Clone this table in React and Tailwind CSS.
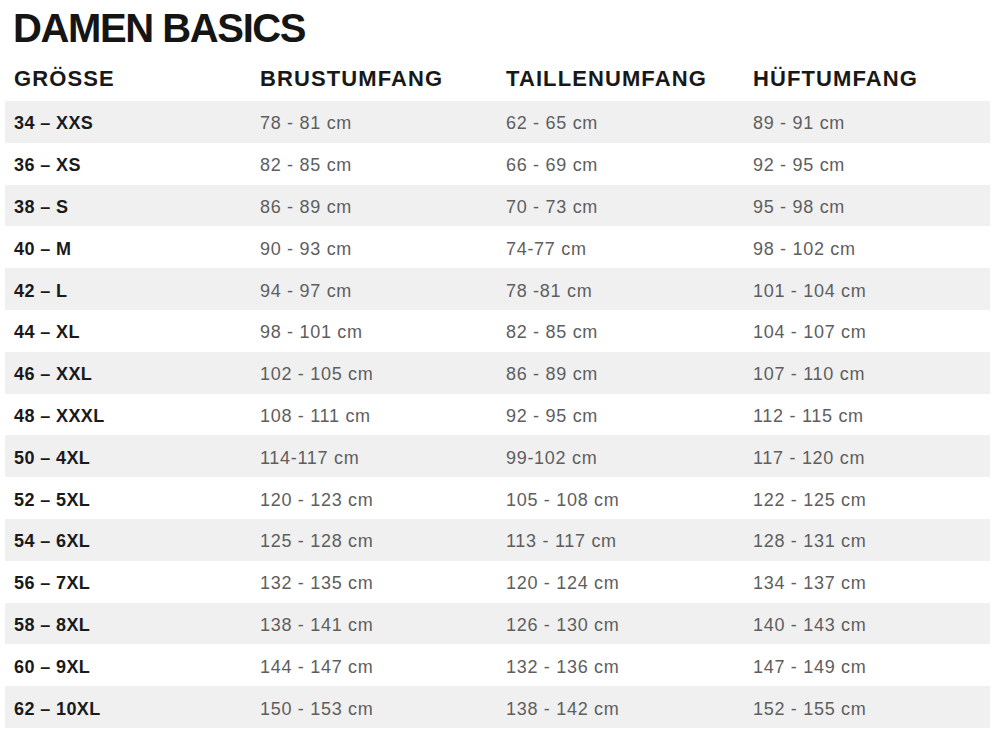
import React from "react";

const rows = [
  ["34 – XXS", "78 - 81 cm", "62 - 65 cm", "89 - 91 cm"],
  ["36 – XS", "82 - 85 cm", "66 - 69 cm", "92 - 95 cm"],
  ["38 – S", "86 - 89 cm", "70 - 73 cm", "95 - 98 cm"],
  ["40 – M", "90 - 93 cm", "74-77 cm", "98 - 102 cm"],
  ["42 – L", "94 - 97 cm", "78 -81 cm", "101 - 104 cm"],
  ["44 – XL", "98 - 101 cm", "82 - 85 cm", "104 - 107 cm"],
  ["46 – XXL", "102 - 105 cm", "86 - 89 cm", "107 - 110 cm"],
  ["48 – XXXL", "108 - 111 cm", "92 - 95 cm", "112 - 115 cm"],
  ["50 – 4XL", "114-117 cm", "99-102 cm", "117 - 120 cm"],
  ["52 – 5XL", "120 - 123 cm", "105 - 108 cm", "122 - 125 cm"],
  ["54 – 6XL", "125 - 128 cm", "113 - 117 cm", "128 - 131 cm"],
  ["56 – 7XL", "132 - 135 cm", "120 - 124 cm", "134 - 137 cm"],
  ["58 – 8XL", "138 - 141 cm", "126 - 130 cm", "140 - 143 cm"],
  ["60 – 9XL", "144 - 147 cm", "132 - 136 cm", "147 - 149 cm"],
  ["62 – 10XL", "150 - 153 cm", "138 - 142 cm", "152 - 155 cm"],
];

export default function App() {
  return (
    <div className="w-[1000px] h-[735px] bg-white overflow-hidden font-['Liberation_Sans',Arial,sans-serif]">
      <h1 className="mt-[8px] pl-[13px] text-[40px] leading-none font-bold tracking-[-1.4px] text-[#151515]">
        DAMEN BASICS
      </h1>

      <div className="mt-[20px] pl-[14px] grid grid-cols-[246px_246px_247px_1fr] text-[22px] leading-none font-bold tracking-[1.1px] text-[#181818]">
        <div>GRÖSSE</div>
        <div>BRUSTUMFANG</div>
        <div>TAILLENUMFANG</div>
        <div>HÜFTUMFANG</div>
      </div>

      <div className="mt-[11px] ml-[5px] w-[985px]">
        {rows.map((r, i) => (
          <div
            key={r[0]}
            className={`h-[41.8px] pl-[9px] pt-[4px] grid grid-cols-[246px_246px_247px_1fr] items-center text-[18px] ${
              i % 2 === 0 ? "bg-[#f0f0f1]" : "bg-white"
            }`}
          >
            <div className="font-bold tracking-[0.4px] text-[#1a1a1a]">{r[0]}</div>
            <div className="tracking-[0.7px] text-[#5e5e5e]">{r[1]}</div>
            <div className="tracking-[0.7px] text-[#5e5e5e]">{r[2]}</div>
            <div className="tracking-[0.7px] text-[#5e5e5e]">{r[3]}</div>
          </div>
        ))}
      </div>
    </div>
  );
}
